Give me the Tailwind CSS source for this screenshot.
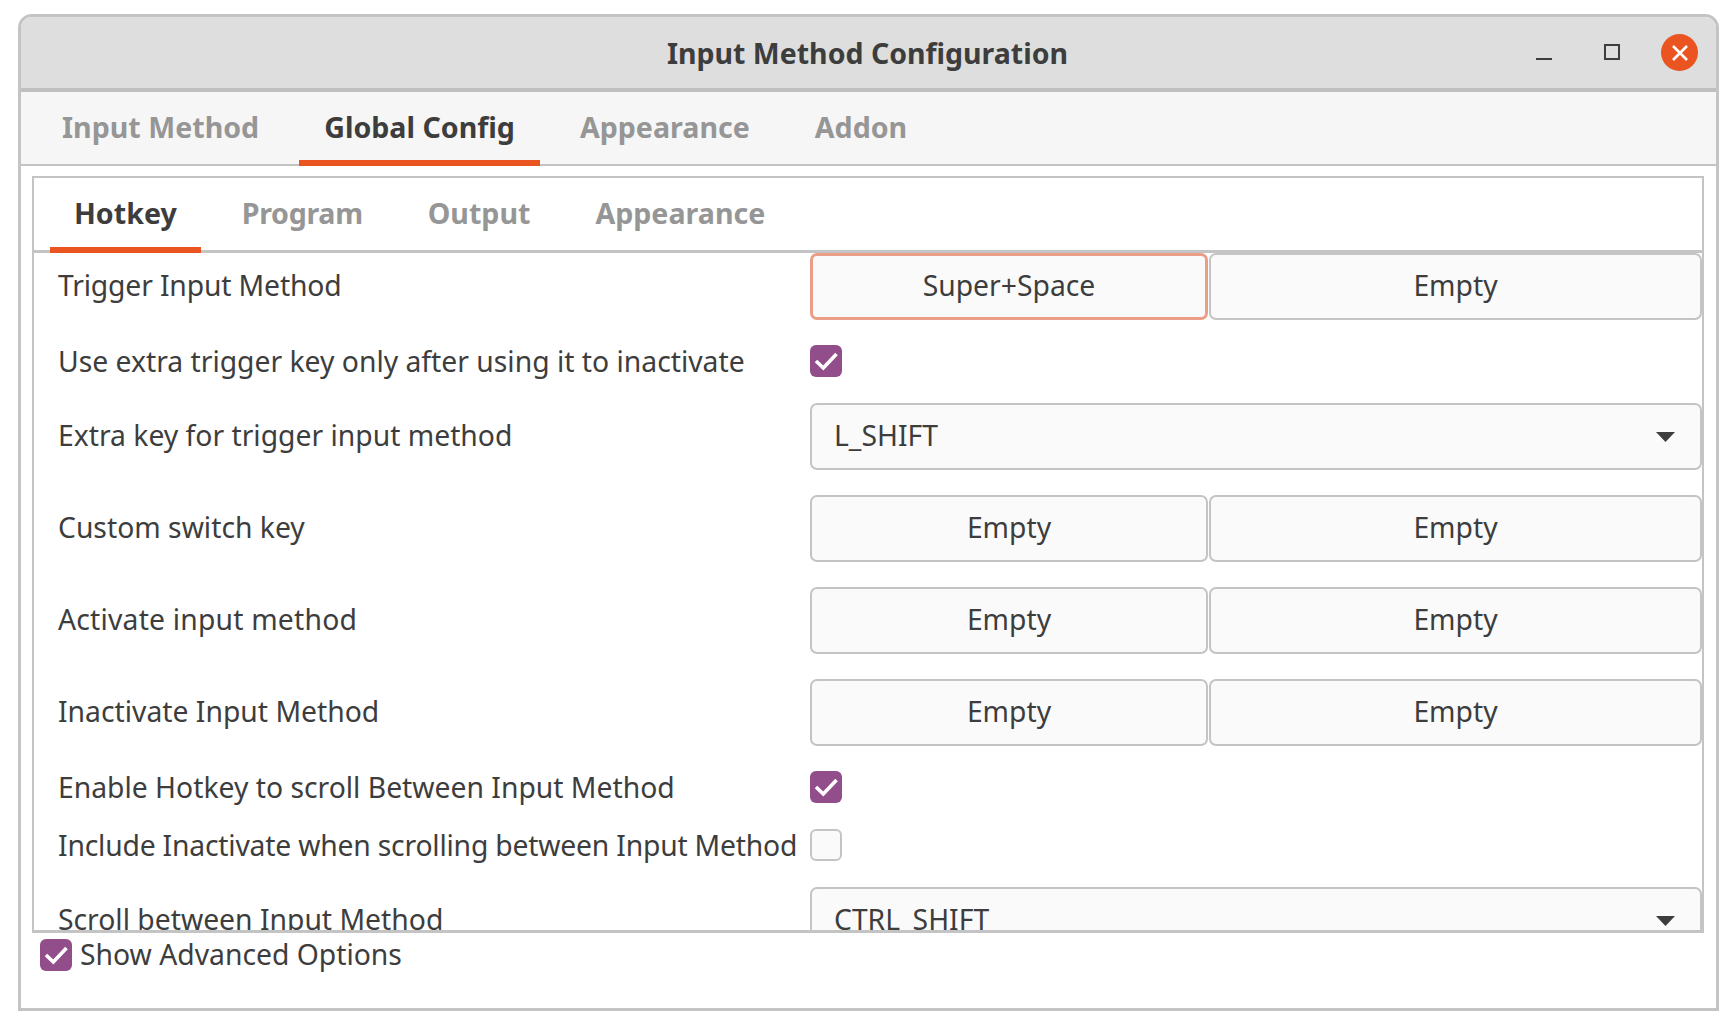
<!DOCTYPE html>
<html lang="en">
<head>
  <meta charset="utf-8" />
  <title>Input Method Configuration</title>
  <script src="https://cdn.jsdelivr.net/npm/@tailwindcss/browser@4"></script>
</head>
<body class="bg-white text-[#3d3d3d] font-['Noto_Sans',sans-serif] text-[28.3px] overflow-hidden">

  <div class="ml-[18px] mt-[14px] w-[1701px] h-[997px] border-[3px] border-[#c4c4c4] rounded-t-[14px] flex flex-col bg-white">

    <!-- Title bar -->
    <header class="relative h-[75px] shrink-0 bg-[#dedede] border-b-4 border-[#bfbfbf] rounded-t-[11px] flex items-center justify-center">
      <span class="font-bold text-[28.5px] mt-[1px] -ml-[2px]">Input Method Configuration</span>
      <div class="absolute right-[18px] top-[17px] flex items-center">
        <span class="w-[16px] h-[2px] bg-[#3d3d3d] mt-[12px] mr-[52px]"></span>
        <span class="w-[16px] h-[16px] border-2 border-[#3d3d3d] -mt-[2px] mr-[41px]"></span>
        <span class="w-[37px] h-[37px] rounded-full bg-[#e95420] flex items-center justify-center">
          <svg width="16" height="16" viewBox="0 0 16 16"><path d="M1 1 L15 15 M15 1 L1 15" stroke="#fff" stroke-width="2.6" fill="none" /></svg>
        </span>
      </div>
    </header>

    <!-- Top tabs -->
    <nav class="h-[74px] shrink-0 bg-[#f6f6f6] border-b-2 border-[#c4c4c4] flex gap-[15px] pl-4 font-bold text-[28.6px]">
      <a class="h-[74px] px-[25px] pt-[14px] text-[#969696]">Input Method</a>
      <a class="h-[74px] px-[25px] pt-[14px] border-b-[6px] border-[#e95420]">Global Config</a>
      <a class="h-[74px] px-[25px] pt-[14px] text-[#969696]">Appearance</a>
      <a class="h-[74px] px-[25px] pt-[14px] text-[#969696]">Addon</a>
    </nav>

    <!-- Inner notebook -->
    <section class="ml-[11px] mt-[10px] w-[1672px] h-[757px] shrink-0 border-2 border-[#c4c4c4] border-b-[3px] flex flex-col">
      <nav class="h-[75px] shrink-0 border-b-[3px] border-[#c4c4c4] flex gap-[17px] pl-[16px] font-bold text-[28.6px]">
        <a class="h-[75px] px-[24px] pt-[14px] border-b-[6px] border-[#e95420]">Hotkey</a>
        <a class="h-[75px] px-[24px] pt-[14px] text-[#969696] tracking-[-0.3px]">Program</a>
        <a class="h-[75px] px-[24px] pt-[14px] text-[#969696]">Output</a>
        <a class="h-[75px] px-[24px] pt-[14px] text-[#969696]">Appearance</a>
      </nav>

      <div class="flex-1 overflow-hidden pl-[24px] flex flex-col">
        <div class="h-[67px] shrink-0 flex items-center">
          <span class="w-[752px] shrink-0 pb-[3px] tracking-[-0.15px]">Trigger Input Method</span>
          <button class="w-[398px] h-[67px] pb-[3px] bg-[#fafafa] border-[3px] border-[#eb9d85] rounded-[7px]">Super+Space</button>
          <button class="ml-[1px] flex-1 h-[67px] pb-[3px] bg-[#fafafa] border-2 border-[#c4c4c4] rounded-[7px]">Empty</button>
        </div>

        <div class="h-[32px] mt-[25px] shrink-0 flex items-center">
          <span class="w-[752px] shrink-0">Use extra trigger key only after using it to inactivate</span>
          <span class="w-[32px] h-[32px] rounded-[6px] bg-[#924d8b]">
            <svg width="32" height="32" viewBox="0 0 32 32"><path d="M6 16 L13.3 23 L26.5 9" stroke="#fff" stroke-width="3.6" fill="none" /></svg>
          </span>
        </div>

        <div class="h-[67px] mt-[26px] shrink-0 flex items-center">
          <span class="w-[752px] shrink-0 pb-[3px]">Extra key for trigger input method</span>
          <div class="flex-1 h-[67px] pb-[3px] bg-[#fafafa] border-2 border-[#c4c4c4] rounded-[7px] flex items-center justify-between pl-[22px] pr-[25px]">
            <span>L_SHIFT</span>
            <svg class="mt-[3px]" width="19" height="10" viewBox="0 0 19 10"><path d="M0 0 H19 L9.5 10 Z" fill="#3d3d3d" /></svg>
          </div>
        </div>

        <div class="h-[67px] mt-[25px] shrink-0 flex items-center">
          <span class="w-[752px] shrink-0 pb-[3px]">Custom switch key</span>
          <button class="w-[398px] h-[67px] pb-[3px] bg-[#fafafa] border-2 border-[#c4c4c4] rounded-[7px]">Empty</button>
          <button class="ml-[1px] flex-1 h-[67px] pb-[3px] bg-[#fafafa] border-2 border-[#c4c4c4] rounded-[7px]">Empty</button>
        </div>

        <div class="h-[67px] mt-[25px] shrink-0 flex items-center">
          <span class="w-[752px] shrink-0 pb-[3px] tracking-[0.2px]">Activate input method</span>
          <button class="w-[398px] h-[67px] pb-[3px] bg-[#fafafa] border-2 border-[#c4c4c4] rounded-[7px]">Empty</button>
          <button class="ml-[1px] flex-1 h-[67px] pb-[3px] bg-[#fafafa] border-2 border-[#c4c4c4] rounded-[7px]">Empty</button>
        </div>

        <div class="h-[67px] mt-[25px] shrink-0 flex items-center">
          <span class="w-[752px] shrink-0 pb-[3px]">Inactivate Input Method</span>
          <button class="w-[398px] h-[67px] pb-[3px] bg-[#fafafa] border-2 border-[#c4c4c4] rounded-[7px]">Empty</button>
          <button class="ml-[1px] flex-1 h-[67px] pb-[3px] bg-[#fafafa] border-2 border-[#c4c4c4] rounded-[7px]">Empty</button>
        </div>

        <div class="h-[32px] mt-[25px] shrink-0 flex items-center">
          <span class="w-[752px] shrink-0">Enable Hotkey to scroll Between Input Method</span>
          <span class="w-[32px] h-[32px] rounded-[6px] bg-[#924d8b]">
            <svg width="32" height="32" viewBox="0 0 32 32"><path d="M6 16 L13.3 23 L26.5 9" stroke="#fff" stroke-width="3.6" fill="none" /></svg>
          </span>
        </div>

        <div class="h-[32px] mt-[26px] shrink-0 flex items-center">
          <span class="w-[752px] shrink-0 tracking-[-0.2px]">Include Inactivate when scrolling between Input Method</span>
          <span class="w-[32px] h-[32px] rounded-[6px] bg-[#fafafa] border-2 border-[#c4c4c4]"></span>
        </div>

        <div class="h-[67px] mt-[26px] shrink-0 flex items-center">
          <span class="w-[752px] shrink-0 pb-[3px]">Scroll between Input Method</span>
          <div class="flex-1 h-[67px] pb-[3px] bg-[#fafafa] border-2 border-[#c4c4c4] rounded-[7px] flex items-center justify-between pl-[22px] pr-[25px]">
            <span>CTRL_SHIFT</span>
            <svg class="mt-[3px]" width="19" height="10" viewBox="0 0 19 10"><path d="M0 0 H19 L9.5 10 Z" fill="#3d3d3d" /></svg>
          </div>
        </div>
      </div>
    </section>

    <!-- Bottom option -->
    <label class="ml-[19px] flex items-center gap-[8px]">
      <span class="w-[32px] h-[32px] rounded-[6px] bg-[#924d8b]">
        <svg width="32" height="32" viewBox="0 0 32 32"><path d="M6 16 L13.3 23 L26.5 9" stroke="#fff" stroke-width="3.6" fill="none" /></svg>
      </span>
      <span class="pb-[1px]">Show Advanced Options</span>
    </label>
  </div>
</body>
</html>
